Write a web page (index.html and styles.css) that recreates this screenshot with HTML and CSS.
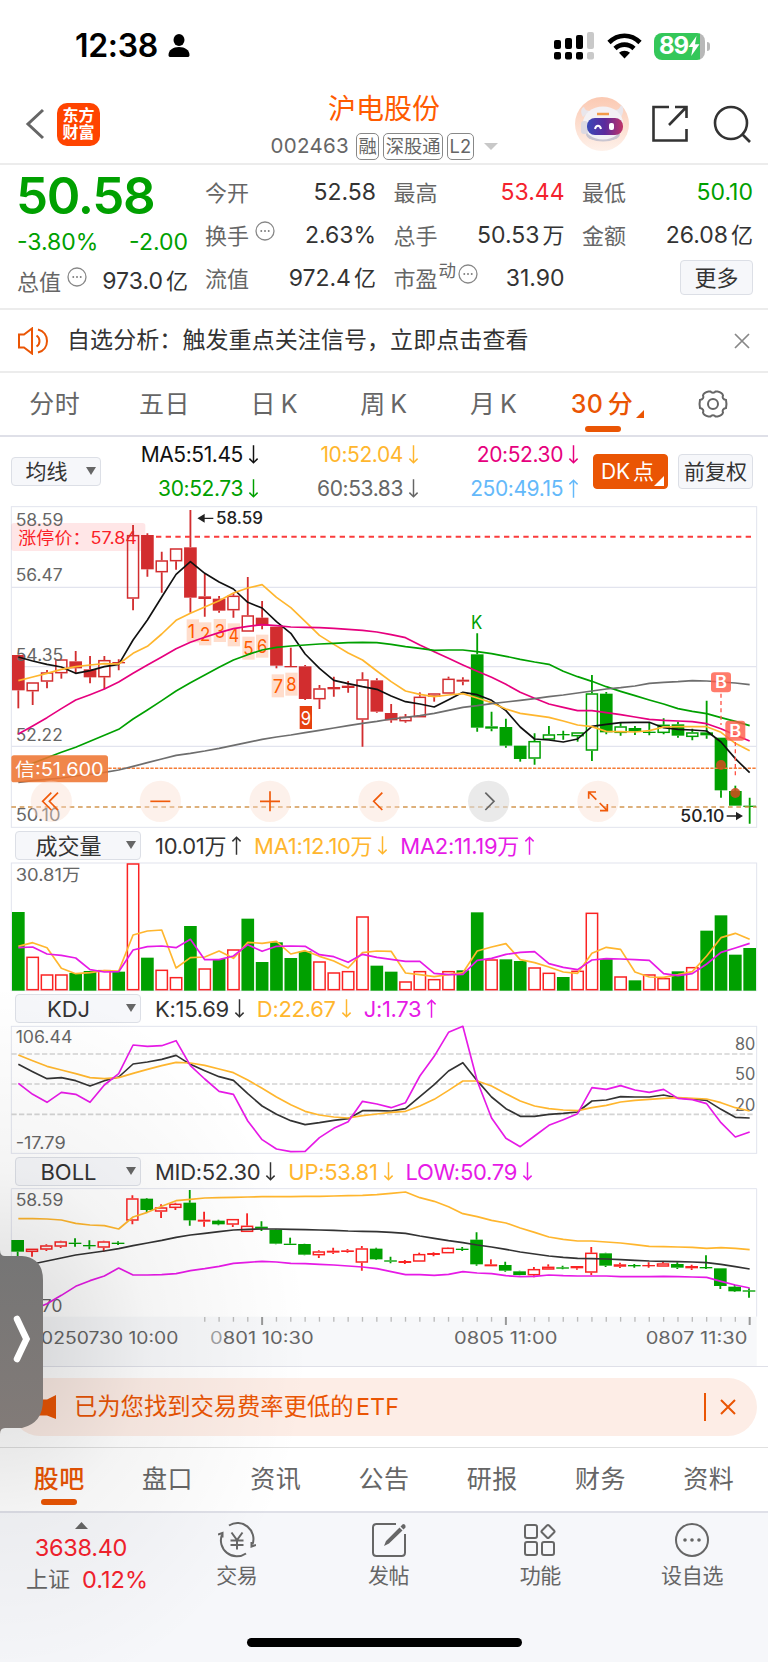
FILE: index.html
```html
<!DOCTYPE html>
<html lang="zh-CN">
  <head>
    <meta charset="UTF-8" />
    <meta name="viewport" content="width=device-width, initial-scale=1.0" />
    <title>沪电股份 002463</title>
    <link rel="stylesheet" href="styles.css">
  </head>
  <body>
    <svg class="defs">
      <symbol id="down" viewBox="0 0 12 22"><path d="M6 1v19M1.5 15.5 6 20l4.500-4.500" /></symbol>
      <symbol id="up" viewBox="0 0 12 22"><path d="M6 21V2M1.500 6.500 6 2l4.500 4.500" /></symbol>
      <symbol id="dots" viewBox="0 0 20 20">
        <circle cx="10" cy="10" r="9" />
        <path d="M5.500 10h1.600M9.200 10h1.600M12.900 10h1.600" stroke-width="1.800" />
      </symbol>
    </svg>

    <div class="status">
      <span class="time">12:38</span>
      <svg class="person" width="22" height="24" viewBox="0 0 22 24">
        <ellipse cx="11" cy="6" rx="5.500" ry="6" />
        <path d="M0.500 21c0-5 4.500-8 10.500-8s10.500 3 10.500 8c0 1.500-.8 2-2 2H2.500c-1.200 0-2-.5-2-2z" />
      </svg>
      <svg class="signal" width="40" height="28" viewBox="0 0 40 28">
        <g>
          <rect x="0" y="8" width="7" height="9" rx="2" /><rect x="11" y="6" width="7" height="11" rx="2" />
          <rect x="22" y="3" width="7" height="14" rx="2" /><rect x="0" y="20" width="7" height="7.500" rx="2" />
          <rect x="11" y="20" width="7" height="7.500" rx="2" /><rect x="22" y="20" width="7" height="7.500" rx="2" />
        </g>
        <g fill="#c9c9c9"><rect x="33" y="0" width="7" height="17" rx="2" /><rect x="33" y="20" width="7" height="7.500" rx="2" /></g>
      </svg>
      <svg class="wifi" width="35" height="26" viewBox="0 0 35 26">
        <g fill="none" stroke="#000" stroke-width="4.600">
          <path d="M2 9.500C11 .5 24 .5 33 9.500" /><path d="M8 15.500c5.500-5.200 13.500-5.200 19 0" />
        </g>
        <path d="M12 19.800c3-2.800 8-2.800 11 0L17.500 25.500z" />
      </svg>
      <div class="battery">89<svg width="12" height="20" viewBox="0 0 12 20"><path d="M8.500 0 .5 11h4.300L3.200 20 11.500 8.300H7z" fill="#fff" /></svg></div>
    </div>

    <div class="header">
      <div class="left">
        <svg width="20" height="32" viewBox="0 0 20 32"><path d="M18 2 3 16l15 14" fill="none" stroke="#666" stroke-width="3" /></svg>
        <div class="logo">东方<br>财富</div>
      </div>
      <div class="title">
        <h1>沪电股份</h1>
        <div class="code">
          <span>002463</span><i>融</i><i>深股通</i><i>L2</i>
          <svg width="14" height="8" viewBox="0 0 14 8"><path d="M0 0h14L7 7z" fill="#c8c8c8" /></svg>
        </div>
      </div>
      <div class="right">
        <svg width="54" height="54" viewBox="0 0 54 54">
          <defs>
            <linearGradient id="halo" x2="0" y2="1"><stop stop-color="#fbc9b2" /><stop offset="1" stop-color="#fef1ea" /></linearGradient>
            <linearGradient id="visor"><stop stop-color="#3a49b8" /><stop offset=".5" stop-color="#5b2a9c" /><stop offset="1" stop-color="#c03468" /></linearGradient>
          </defs>
          <circle cx="27" cy="27" r="27" fill="url(#halo)" />
          <path d="M8 20c-3-5-2-9 1-10 1 3 3 4 6 4M46 20c3-5 3-10 0-12-1 3-3 5-6 5" fill="#e9e6ec" />
          <ellipse cx="28" cy="37" rx="17" ry="7.500" fill="#c9c5d0" />
          <ellipse cx="28" cy="26" rx="20" ry="16.500" fill="#f3f1f5" />
          <rect x="6" y="24" width="7" height="13" rx="3" fill="#dcd9e2" />
          <rect x="12" y="21" width="36" height="17" rx="8" fill="url(#visor)" />
          <path d="M20 32c1-4.500 5-4.500 6 0" fill="none" stroke="#fff" stroke-width="2" />
          <rect x="34" y="26" width="5" height="7" rx="2" fill="#fff" />
          <path d="M22 17h12" stroke="#f29a4a" stroke-width="2.500" />
        </svg>
        <svg width="38" height="38" viewBox="0 0 38 38">
          <path d="M18 2H2.500v33.500H35.500V24M24 2h11.500v11M35 2.500 18 20" fill="none" stroke="#333" stroke-width="2.600" />
        </svg>
        <svg width="38" height="38" viewBox="0 0 38 38">
          <g fill="none" stroke="#333" stroke-width="2.600"><circle cx="18" cy="18" r="16" /><path d="m29 29 8 8" /></g>
        </svg>
      </div>
    </div>

    <div class="quote">
      <div class="price">
        <b>50.58</b>
        <div class="row green change"><span>-3.80%</span><span>-2.00</span></div>
        <div class="row"><label>总值<svg class="dots"><use href="#dots" /></svg></label><span>973.0<em>亿</em></span></div>
      </div>
      <div class="cells">
        <div class="row"><label>今开</label><span>52.58</span></div>
        <div class="row"><label>最高</label><span class="red">53.44</span></div>
        <div class="row"><label>最低</label><span class="green">50.10</span></div>
        <div class="row"><label>换手<svg class="dots"><use href="#dots" /></svg></label><span>2.63%</span></div>
        <div class="row"><label>总手</label><span>50.53<em>万</em></span></div>
        <div class="row"><label>金额</label><span>26.08<em>亿</em></span></div>
        <div class="row"><label>流值</label><span>972.4<em>亿</em></span></div>
        <div class="row"><label>市盈<sup>动</sup><svg class="dots near"><use href="#dots" /></svg></label><span>31.90</span></div>
        <div class="row end"><button class="more">更多</button></div>
      </div>
    </div>

    <div class="notice">
      <svg width="31" height="28" viewBox="0 0 31 28">
        <g fill="none" stroke="#ea5504" stroke-width="2"><path d="M1 7.500h5L14 1.500v25L6 20.500H1z" /><path d="M18.500 8.500c4 2.500 4 8.500 0 11M20 2.500c12 3 12 20 0 23" /></g>
      </svg>
      <p>自选分析：触发重点关注信号，立即点击查看</p>
      <svg width="16" height="16" viewBox="0 0 16 16"><path d="m1 1 14 14M15 1 1 15" stroke="#888" stroke-width="1.700" /></svg>
    </div>

    <div class="periods">
      <span>分时</span><span>五日</span><span>日 K</span><span>周 K</span><span>月 K</span>
      <span class="active">30 分<svg width="8" height="8" viewBox="0 0 8 8"><path d="M8 0v8H0z" fill="#ea5504" /></svg></span>
      <span>
        <svg width="30" height="28" viewBox="0 0 30 28">
          <g fill="none" stroke="#666" stroke-width="2">
            <path d="M10.500 1.500h2c1 1.700 4 1.700 5 0h2c3 .5 5 2 5.500 4-1 2 0 4 3 4.500.6 2.500.6 5.500 0 8-3 .5-4 2.500-3 4.500-.5 2-2.500 3.500-5.500 4h-2c-1-1.700-4-1.700-5 0h-2c-3-.5-5-2-5.500-4 1-2 0-4-3-4.500-.6-2.500-.6-5.500 0-8 3-.5 4-2.500 3-4.500.5-2 2.500-3.500 5.500-4z" />
            <circle cx="15" cy="14" r="5" />
          </g>
        </svg>
      </span>
    </div>

    <div class="averages">
      <button class="select small">均线<i></i></button>
      <div class="ma">
        <span>MA5:51.45<svg><use href="#down" /></svg></span>
        <span class="yellow">10:52.04<svg><use href="#down" /></svg></span>
        <span class="pink">20:52.30<svg><use href="#down" /></svg></span>
        <span class="green">30:52.73<svg><use href="#down" /></svg></span>
        <span class="gray">60:53.83<svg><use href="#down" /></svg></span>
        <span class="blue">250:49.15<svg><use href="#up" /></svg></span>
      </div>
      <button class="dk">DK 点<svg width="10" height="10" viewBox="0 0 10 10"><path d="M10 0v10H0z" fill="#fff" /></svg></button>
      <button class="fq">前复权</button>
    </div>

    <svg class="chart" id="kline" viewBox="0 18 2304 966" height="322"></svg>

    <div class="indicator">
      <button class="select">成交量<i></i></button>
      <span>10.01万<svg><use href="#up" /></svg></span>
      <span class="yellow">MA1:12.10万<svg><use href="#down" /></svg></span>
      <span class="purple">MA2:11.19万<svg><use href="#up" /></svg></span>
    </div>
    <svg class="chart" id="volume" viewBox="0 114 2304 384" height="128"></svg>

    <div class="indicator">
      <button class="select">KDJ<i></i></button>
      <span>K:15.69<svg><use href="#down" /></svg></span>
      <span class="yellow">D:22.67<svg><use href="#down" /></svg></span>
      <span class="purple">J:1.73<svg><use href="#up" /></svg></span>
    </div>
    <svg class="chart" id="kdj" viewBox="0 603 2304 384" height="128"></svg>

    <div class="indicator">
      <button class="select">BOLL<i></i></button>
      <span>MID:52.30<svg><use href="#down" /></svg></span>
      <span class="yellow">UP:53.81<svg><use href="#down" /></svg></span>
      <span class="purple">LOW:50.79<svg><use href="#down" /></svg></span>
    </div>
    <svg class="chart" id="boll" viewBox="0 102 2304 531" height="177"></svg>

    <div class="banner">
      <div class="pill">
        <svg width="30" height="24" viewBox="0 0 30 24"><path d="M30 0v24l-9-3.500H0v-16h21z" fill="#ea5504" /></svg>
        <p>已为您找到交易费率更低的 ETF</p>
        <svg class="close" width="16" height="16" viewBox="0 0 16 16"><path d="m1 1 14 14M15 1 1 15" stroke="#ea5504" stroke-width="2" /></svg>
      </div>
    </div>

    <div class="tabs">
      <span class="active">股吧</span><span>盘口</span><span>资讯</span><span>公告</span><span>研报</span><span>财务</span><span>资料</span>
    </div>

    <div class="nav">
      <div class="index">
        <svg width="13" height="7" viewBox="0 0 13 7"><path d="M6.500 0 13 7H0z" fill="#666" /></svg>
        <span class="red">3638.40</span>
        <div>上证<span class="red">0.12%</span></div>
      </div>
      <div class="item">
        <svg width="38" height="36" viewBox="0 0 38 36">
          <g fill="none" stroke="#666" stroke-width="2">
            <path d="M11 3.500A16 16 0 0 1 34.500 22.500M28 31.500A16 16 0 0 1 4 12.500" />
            <path d="M0 12.500 4.500 11v4.500M38 23l-4.500 1.500V20" />
            <path d="M13.500 10.500 19 18l5.500-7.500M19 18v9.500M12.500 18.500h13M12.500 23h13" />
          </g>
        </svg>
        交易
      </div>
      <div class="item">
        <svg width="38" height="36" viewBox="0 0 38 36">
          <path d="M26 2H6.500Q3 2 3 5.500v25Q3 34 6.500 34h25q3.500 0 3.500-3.500V12" fill="none" stroke="#666" stroke-width="2" />
          <path d="m14 24 2-5L29.500 5.500l3 3L19 21.500zM30.500 4.500 33 2q3 0 2.500 3.500L33.500 7.500z" fill="#666" />
        </svg>
        发帖
      </div>
      <div class="item">
        <svg width="38" height="36" viewBox="0 0 38 36">
          <g fill="none" stroke="#666" stroke-width="2">
            <rect x="4" y="3" width="12" height="13" rx="2" /><rect x="4" y="20" width="12" height="13" rx="2" />
            <rect x="21" y="20" width="12" height="13" rx="2" /><rect x="22" y="4.500" width="10" height="10" rx="1.500" transform="rotate(45 27 9.500)" />
          </g>
        </svg>
        功能
      </div>
      <div class="item">
        <svg width="38" height="36" viewBox="0 0 38 36">
          <circle cx="19" cy="18" r="16" fill="none" stroke="#666" stroke-width="2" />
          <g fill="#666"><circle cx="12" cy="18" r="1.800" /><circle cx="19" cy="18" r="1.800" /><circle cx="26" cy="18" r="1.800" /></g>
        </svg>
        设自选
      </div>
    </div>
    <div class="home"></div>

    <div class="shade"></div>
    <svg class="handle" width="44" height="184" viewBox="0 0 44 184">
      <defs><linearGradient id="grip" x2="0" y2="1"><stop stop-color="#757575" /><stop offset="1" stop-color="#827b78" /></linearGradient></defs>
      <path d="M0 0Q0 6 5 6H22Q43 8 43 30V150Q43 173 22 178H5Q0 178 0 184z" fill="url(#grip)" />
      <path d="M17 69Q25 86 26.500 89Q25 92 17 109" fill="none" stroke="#fff" stroke-width="6.500" stroke-linecap="round" />
    </svg>

    <script src="script.js"></script>
  </body>
</html>
```
FILE: styles.css
```css
*,
*::before,
*::after {
  box-sizing: border-box;
  margin: 0;
  padding: 0;
}
body {
  position: relative;
  width: 768px;
  height: 1662px;
  overflow: hidden;
  background-color: #fff;
  color: #333;
  font-family: Inter, "Noto Sans CJK SC", sans-serif;
  font-size: 22px;
  line-height: 1;
  letter-spacing: -0.3px;
}
svg {
  display: block;
  flex-shrink: 0;
}
button {
  font: inherit;
  color: #333;
  letter-spacing: 0;
  background-color: #f6f7fa;
  border: 1.500px solid #dcdfe6;
  border-radius: 4px;
  white-space: nowrap;
}
p,
span {
  white-space: nowrap;
}
.defs {
  position: absolute;
  width: 0;
  height: 0;
}
.red {
  color: #f4222d;
}
.green {
  color: #00a000;
}
.yellow {
  color: #ffb62e;
}
.pink {
  color: #e6007e;
}
.purple {
  color: #e61ae6;
}
.blue {
  color: #64b9fa;
}
.gray {
  color: #666;
}

/* status bar */
.status {
  display: flex;
  align-items: center;
  height: 92px;
  padding: 0 63px 0 75px;
}
.time {
  width: 93px;
  font-size: 32px;
  font-weight: 600;
  color: #000;
}
.signal {
  margin-left: auto;
}
.wifi {
  margin: 0 12px 0 13px;
}
.battery {
  position: relative;
  display: flex;
  align-items: center;
  justify-content: center;
  width: 51px;
  height: 27px;
  border-radius: 8px;
  background: linear-gradient(to right, #34c759 46px, #b8b8b8 46px);
  color: #fff;
  font-size: 24px;
  font-weight: 700;
  letter-spacing: -1px;
}
.battery::after {
  content: "";
  position: absolute;
  right: -5px;
  width: 3px;
  height: 9px;
  border-radius: 0 3px 3px 0;
  background-color: #b8b8b8;
}

/* header */
.header {
  display: grid;
  grid-template-columns: 1fr auto 1fr;
  height: 73px;
  padding: 0 17px 0 25px;
  border-bottom: 2px solid #ececec;
}
.left {
  display: flex;
  align-items: center;
  gap: 12px;
  height: 64px;
}
.logo {
  width: 43px;
  height: 43px;
  padding-top: 4px;
  border-radius: 10px;
  background-color: #ff4400;
  color: #fff;
  font-size: 16px;
  font-weight: 700;
  line-height: 17.500px;
  letter-spacing: 0;
  text-align: center;
}
.title {
  display: flex;
  flex-direction: column;
  align-items: center;
  margin-right: 8px;
}
h1 {
  margin-top: 3px;
  font-size: 28px;
  font-weight: 400;
  line-height: 28px;
  letter-spacing: 0;
  color: #ff5b00;
}
.code {
  display: flex;
  align-items: center;
  gap: 4px;
  margin-top: 10px;
  color: #666;
  font-size: 20.500px;
  letter-spacing: 0.3px;
}
.code span {
  margin-right: 3px;
}
.code i {
  height: 27px;
  padding: 0 1.500px;
  border: 1.500px solid #888;
  border-radius: 5px;
  font-size: 18.300px;
  font-style: normal;
  line-height: 24px;
  letter-spacing: 0;
}
.code svg {
  margin-left: 6px;
}
.right {
  display: flex;
  align-items: center;
  justify-content: flex-end;
  gap: 24px;
  height: 64px;
}
.right svg:first-child {
  margin-right: -2px;
}

/* quote */
.quote {
  display: flex;
  gap: 17px;
  height: 145px;
  padding: 6px 15px 0 17px;
  border-bottom: 2px solid #ececec;
}
.price {
  width: 171px;
}
.price b {
  display: block;
  height: 51px;
  margin-left: -1px;
  font-size: 51px;
  font-weight: 600;
  line-height: 50px;
  letter-spacing: -1.300px;
  color: #00a000;
}
.row {
  display: flex;
  align-items: center;
  justify-content: space-between;
  height: 43px;
}
.row label {
  display: flex;
  align-items: center;
  color: #666;
  letter-spacing: 0;
}
.row span {
  font-size: 23px;
  letter-spacing: 0;
}
.row em {
  margin-left: 3px;
  font-size: 22px;
  font-style: normal;
}
.price .row {
  margin-top: 1px;
}
.price .change {
  height: 34px;
  margin-top: 3px;
}
.cells {
  flex: 1;
  display: grid;
  grid-template-columns: repeat(3, 171px);
  column-gap: 17.500px;
  align-content: start;
}
.dots {
  width: 20px;
  height: 20px;
  margin: -9px 0 0 6px;
  fill: none;
  stroke: #888;
  stroke-width: 1.300;
}
.dots.near {
  margin-left: 2px;
}
sup {
  margin: -16px 0 0 1px;
  font-size: 17.500px;
  line-height: 1;
}
.row.end {
  justify-content: flex-end;
}
.more {
  width: 73px;
  height: 35px;
  margin-top: -2px;
}

/* notice */
.notice {
  display: flex;
  align-items: center;
  height: 63px;
  padding: 0 18px;
  border-bottom: 2px solid #ececec;
}
.notice p {
  flex: 1;
  margin-left: 18px;
  font-size: 23px;
  letter-spacing: 0.080px;
}

/* tabs */
.periods,
.tabs {
  display: grid;
  grid-template-columns: repeat(7, 1fr);
  height: 64px;
  border-bottom: 2px solid #dfe0e8;
  font-size: 25px;
  letter-spacing: 0.500px;
  word-spacing: -3px;
  color: #666;
}
.periods span,
.tabs span {
  position: relative;
  display: flex;
  align-items: center;
  justify-content: center;
}
.periods .active,
.tabs .active {
  color: #ea5504;
  font-weight: 500;
}
.periods .active svg {
  margin: 20px -8px 0 3px;
}
.active::after {
  content: "";
  position: absolute;
  bottom: 3px;
  width: 36px;
  height: 6px;
  border-radius: 3px;
  background-color: #ea5504;
}

/* averages */
.averages {
  display: flex;
  align-items: center;
  height: 69px;
  padding: 0 15px 0 11px;
}
.select {
  position: relative;
  width: 126px;
  height: 29px;
  padding-right: 19px;
  line-height: 24px;
}
.select i {
  position: absolute;
  top: 9px;
  right: 4px;
  border: 5px solid transparent;
  border-top: 8px solid #666;
  border-bottom: 0;
}
.select.small {
  width: 90px;
  font-size: 21px;
}
.ma {
  display: grid;
  grid-template-columns: 158px 160px 160px;
  grid-auto-rows: 34px;
  width: 478px;
  margin-right: 14px;
}
.ma span,
.indicator span {
  display: flex;
  align-items: center;
}
.ma span {
  justify-content: flex-end;
  font-size: 21px;
  letter-spacing: -0.400px;
}
.ma span:first-child {
  color: #111;
}
.ma svg,
.indicator span svg {
  width: 11px;
  height: 21px;
  margin-left: 5px;
  fill: none;
  stroke: currentColor;
  stroke-width: 1.600;
}
.dk,
.fq {
  position: relative;
  width: 75px;
  height: 35px;
  font-size: 21px;
}
.dk {
  padding-right: 6px;
  border-color: #ea5504;
  background-color: #ea5504;
  color: #fff;
  word-spacing: -3px;
}
.dk svg {
  position: absolute;
  right: 3px;
  bottom: 2px;
}
.fq {
  margin-left: 10px;
}

/* charts */
.chart {
  width: 768px;
  overflow: visible;
}
.chart text {
  font-size: 50px;
  letter-spacing: 0;
  fill: #666;
}
.indicator {
  display: flex;
  align-items: center;
  height: 35px;
  padding-left: 15px;
}
.indicator span {
  margin-right: 12px;
}
.indicator .select {
  margin-right: 14px;
}

/* banner */
.banner {
  height: 82px;
  padding: 11px 11px 0;
  border-top: 1px solid #dfe0e8;
  border-bottom: 1px solid #e0e0e0;
}
.pill {
  display: flex;
  align-items: center;
  height: 58px;
  padding: 0 21px 0 15px;
  border-radius: 29px;
  background-color: #fdede6;
  color: #ea5504;
}
.pill p {
  flex: 1;
  margin-left: 18px;
  font-size: 23.300px;
  letter-spacing: 0;
  word-spacing: -4px;
}
.close {
  box-sizing: content-box;
  padding: 6px 0 6px 14px;
  border-left: 2px solid #ea5504;
}

/* bottom */
.tabs {
  height: 65px;
  padding: 0 5px;
}
.tabs .active::after {
  bottom: 6px;
}
.nav {
  display: grid;
  grid-template-columns: 161px repeat(4, 1fr);
  height: 149px;
  padding-top: 9px;
  background-color: #f6f7fa;
  color: #666;
}
.index {
  display: flex;
  flex-direction: column;
  align-items: center;
  padding-left: 1px;
}
.index span {
  font-size: 23.500px;
}
.index > span {
  margin: 7px 0 8px;
}
.index div {
  display: flex;
  align-items: center;
  letter-spacing: 0;
  margin-left: 12px;
}
.index div span {
  margin-left: 12px;
}
.item {
  display: flex;
  flex-direction: column;
  align-items: center;
  gap: 7px;
  font-size: 21px;
}
.home {
  position: absolute;
  left: 247px;
  top: 1638px;
  width: 275px;
  height: 9px;
  border-radius: 5px;
  background-color: #000;
}
.shade {
  position: absolute;
  inset: 0;
  background: radial-gradient(ellipse 310px 360px at 0 1343px, rgba(0, 0, 0, 0.150), rgba(0, 0, 0, 0.045) 48%, transparent);
}
.handle {
  position: absolute;
  left: 0;
  top: 1250px;
}
```
FILE: script.js
```js
// three chart units are one css pixel
const STEP = 43.02;
const RIGHT = 2270;
const RED = "#d22d2f";
const BRIGHT = "#fa2323";
const GREEN = "#00a000";
const YELLOW = "#ffb62e";
const PINK = "#e6007e";
const PURPLE = "#e61ae6";
const LINE = "#e2e4ee";

const x = (i) => 55 + i * STEP;

function line(values, color, width = 5) {
  const points = values.map((y, i) => `${x(i).toFixed(1)},${y}`).join(" ");
  return `<polyline points="${points}" fill="none" stroke="${color}" stroke-width="${width}" stroke-linejoin="round" />`;
}

function rule(x1, y, x2, color, width = 3, dash = "") {
  return `<path d="M${x1} ${y}H${x2}" stroke="${color}" stroke-width="${width}" stroke-dasharray="${dash}" />`;
}

function text(x, y, str, length, attrs = "") {
  return `<text x="${x}" y="${y}" textLength="${length}" lengthAdjust="spacingAndGlyphs" ${attrs}>${str}</text>`;
}

function frame(top, bottom) {
  return `<rect x="34" y="${top}" width="${RIGHT - 34}" height="${bottom - top}" fill="none" stroke="${LINE}" stroke-width="3" />`;
}

// r/g = filled, R/G = hollow; then high, top, bottom, low
function candles(rows, red, shift = 0) {
  return rows
    .trim()
    .split("\n")
    .map((row, i) => {
      const [type, ...v] = row.trim().split(" ");
      const [high, top, bottom, low] = v.map(Number);
      const color = type.toLowerCase() === "r" ? red : GREEN;
      const hollow = type === "R" || type === "G";
      const cx = x(i) + shift;
      const body = hollow
        ? `<rect x="${cx - 16.5}" y="${top + 2}" width="33" height="${Math.max(bottom - top - 4, 3)}" fill="none" stroke="${color}" stroke-width="4.5" />`
        : `<rect x="${cx - 19}" y="${top}" width="38" height="${Math.max(bottom - top, 4)}" fill="${color}" />`;
      return `<path d="M${cx} ${high}V${top}M${cx} ${bottom}V${low}" stroke="${color}" stroke-width="5.5" />${body}`;
    })
    .join("");
}

const kline = `
  r 465 465 571 625
  R 547 547 574 615
  R 510 517 545 565
  R 478 478 520 536
  r 453 484 505 520
  r 468 508 532 550
  R 468 480 532 568
  r 478 486 490 511
  R 75 105 296 331
  r 100 105 208 230
  R 155 181 217 278
  R 145 145 184 209
  r 30 142 293 338
  r 222 289 297 350
  r 288 296 332 338
  R 280 287 331 353
  R 231 346 395 395
  r 303 353 377 388
  r 380 380 497 505
  r 443 498 501 501
  r 495 499 597 600
  R 555 565 598 627
  r 530 561 568 590
  r 543 557 564 578
  R 517 538 659 740
  r 535 541 635 638
  r 612 639 661 668
  R 642 650 664 668
  R 577 590 652 652
  R 580 580 590 605
  R 530 536 581 581
  r 532 539 545 556
  g 400 463 683 695
  g 635 679 686 694
  g 656 681 737 743
  g 737 737 777 785
  G 700 723 776 794
  G 678 703 719 719
  g 692 702 706 719
  G 697 697 709 725
  G 525 580 752 783
  g 576 581 697 703
  G 668 679 699 707
  g 678 684 694 705
  g 668 695 699 706
  G 655 674 699 703
  g 665 673 707 713
  G 686 697 711 721
  g 602 697 706 716
  g 713 713 871 893
  g 857 873 917 917
  g 893 917 920 971`;

const ma5 = [471, 483, 493, 501, 520, 512, 500, 493, 420, 360, 291, 223, 185, 220, 246, 267, 307, 324, 365, 400, 462, 505, 541, 551, 560, 568, 588, 605, 612, 621, 599, 577, 584, 601, 632, 681, 717, 720, 726, 717, 679, 673, 668, 667, 667, 683, 688, 690, 693, 726, 776, 818];
const ma10 = [542, 531, 520, 508, 500, 495, 491, 492, 460, 439, 402, 361, 340, 321, 302, 279, 264, 254, 292, 323, 364, 406, 433, 459, 480, 513, 545, 573, 583, 590, 585, 581, 594, 608, 627, 640, 646, 652, 663, 675, 680, 694, 695, 696, 692, 681, 680, 680, 680, 697, 730, 752];
const ma20 = [702, 678, 653, 626, 600, 584, 567, 546, 520, 495, 471, 446, 427, 412, 398, 386, 379, 374, 377, 381, 382, 383, 385, 388, 391, 396, 404, 413, 435, 455, 475, 495, 514, 532, 553, 577, 595, 612, 622, 632, 632, 638, 644, 651, 658, 661, 663, 665, 671, 686, 705, 723];
const ma30 = [808, 790, 773, 757, 742, 724, 706, 688, 657, 630, 602, 573, 548, 525, 502, 480, 464, 450, 442, 438, 435, 432, 430, 428, 427, 428, 433, 440, 445, 451, 450, 450, 455, 461, 469, 478, 486, 493, 514, 530, 544, 560, 574, 587, 600, 612, 626, 634, 641, 653, 664, 677];
const ma60 = [847, 842, 838, 834, 828, 823, 817, 810, 799, 788, 777, 766, 760, 753, 745, 736, 727, 718, 711, 705, 698, 691, 684, 677, 670, 664, 657, 652, 647, 640, 631, 622, 617, 611, 606, 601, 596, 590, 585, 579, 573, 567, 563, 558, 550, 547, 545, 542, 543, 546, 549, 554];

const marks = [[560, 358], [597, 367], [641, 357], [683, 370], [727, 410], [768, 404], [815, 523], [856, 518], [899, 618]];

function mark([mx, my], i) {
  const last = i === 8;
  return `<rect x="${mx}" y="${my}" width="37" height="69" fill="${last ? "#e6410f" : "#ffd9c7"}" fill-opacity="${last ? 1 : 0.9}" />
    ${text(mx + 3, my + 56, i + 1, i ? 31 : 22, `style="font-size:58px;fill:${last ? "#fff" : "#ff5a00"}"`)}`;
}

const buttons = [
  [154, "M0-26-26 0 0 26M20-26-6 0 20 26"],
  [481, "M-30 0H30"],
  [810, "M-30 0H30M0-30V30"],
  [1137, "M10-26-16 0 10 26"],
  [1466, "M-10-26 16 0-10 26"],
  [1794, "M-5-5-28-28M-28-8V-28H-6M5 5 28 28M28 8V28H6"],
];

function button([cx, d]) {
  const gray = cx === 1466;
  return `<g transform="translate(${cx} 904)"><circle r="62" fill="${gray ? "#dcdcdc" : "#fbdccd"}" fill-opacity="${gray ? 0.6 : 0.4}" />
    <path d="${d}" fill="none" stroke="${gray ? "#666" : "#f05a0a"}" stroke-width="5" /></g>`;
}

function badge(bx, by, to, dot) {
  return `<path d="M${bx} ${by + 34}V${to}" stroke="#ff5548" stroke-width="4" stroke-dasharray="12 10" />
    <circle cx="${bx}" cy="${dot}" r="15" fill="#c8501e" fill-opacity=".9" />
    <rect x="${bx - 30}" y="${by - 30}" width="60" height="60" rx="10" fill="#ff5a46" fill-opacity=".8" />
    ${text(bx - 18, by + 18, "B", 36, 'style="font-weight:600;fill:#fff"')}`;
}

document.getElementById("kline").innerHTML = [
  frame(20, 982),
  rule(34, 262, RIGHT, LINE, 4), rule(34, 500, RIGHT, LINE, 4), rule(34, 739, RIGHT, LINE, 4),
  '<rect x="34" y="69" width="402" height="84" rx="8" fill="#ff3c46" fill-opacity=".13" />',
  text(55, 131, "涨停价：57.84", 356, 'style="fill:#fa1e28"'),
  candles(kline, RED),
  text(47, 78, "58.59", 143), text(47, 243, "56.47", 141), text(47, 484, "54.35", 143),
  text(47, 724, "52.22", 141), text(47, 963, "50.10", 135),
  rule(468, 110, 2264, "#fa3c3c", 6, "16 13"),
  rule(325, 805, RIGHT, "#f57d37", 4.5, "10 4"),
  rule(34, 921, RIGHT, "#d29650", 5, "14 11"),
  marks.map(mark).join(""),
  line(ma5, "#111"), line(ma10, YELLOW), line(ma20, PINK), line(ma30, GREEN), line(ma60, "#6e6e6e"),
  '<rect x="34" y="766" width="290" height="81" rx="8" fill="#ee7430" fill-opacity=".87" />',
  text(45, 828, "信:51.600", 266, 'style="font-size:54px;fill:#fff"'),
  '<path d="M596 55h44M612 45l-16 10 16 10z" fill="#222" stroke="#222" stroke-width="4" />',
  text(648, 73, "58.59", 141, 'style="fill:#222;font-weight:500"'),
  text(2041, 967, "50.10", 132, 'style="fill:#222;font-weight:500"'),
  '<path d="M2180 948h44M2210 939l15 9-15 9z" fill="#222" stroke="#222" stroke-width="4" />',
  text(1413, 386, "K", 34, `style="font-size:56px;fill:${GREEN}"`),
  badge(2163, 547, 675, 795), badge(2206, 692, 835, 879),
  buttons.map(button).join(""),
].join("");

const volumes = "g261 r397 r450 r450 g444 g438 r437 g440 r117 g398 r436 r458 g303 r432 g402 r375 g281 g411 g352 g399 g379 r411 r444 r440 r276 g422 g440 r471 r440 r464 r440 g436 g262 r405 g403 g408 r429 r445 g456 r439 r265 g402 r456 g466 r450 r461 g439 r428 g317 g271 g389 g369";

const bars = volumes.split(" ").map((v, i) => {
  const top = Number(v.slice(1));
  return v[0] === "g"
    ? `<rect x="${x(i) - 19}" y="${top}" width="38" height="${497 - top}" fill="${GREEN}" />`
    : `<rect x="${x(i) - 17}" y="${top}" width="34" height="${494 - top}" fill="#fff" stroke="${BRIGHT}" stroke-width="4.5" />`;
});

const vol1 = [364, 353, 368, 430, 446, 443, 437, 438, 330, 318, 315, 429, 398, 396, 378, 400, 352, 355, 349, 387, 377, 394, 408, 429, 383, 378, 379, 444, 449, 455, 449, 443, 378, 366, 356, 404, 413, 426, 441, 445, 385, 367, 373, 441, 456, 457, 449, 440, 393, 338, 325, 343];
const vol2 = [368, 366, 387, 391, 399, 434, 441, 440, 375, 365, 363, 368, 343, 404, 404, 393, 359, 379, 364, 363, 364, 389, 395, 412, 388, 397, 403, 409, 409, 445, 449, 448, 406, 400, 388, 382, 380, 416, 427, 434, 405, 401, 402, 404, 406, 446, 452, 446, 417, 382, 369, 355];

document.getElementById("volume").innerHTML = [
  frame(114, 497),
  text(47, 167, "30.81万", 194),
  bars.join(""),
  line(vol1, YELLOW), line(vol2, PURPLE),
].join("");

const k = [718, 740, 761, 758, 767, 783, 767, 756, 717, 711, 703, 691, 718, 737, 755, 766, 806, 843, 868, 887, 899, 893, 886, 881, 857, 857, 858, 851, 815, 779, 738, 713, 767, 816, 851, 874, 874, 868, 865, 861, 828, 825, 815, 816, 816, 810, 819, 822, 826, 853, 877, 879];
const d = [690, 707, 724, 735, 746, 758, 761, 758, 745, 733, 722, 712, 714, 721, 732, 743, 765, 790, 816, 839, 859, 870, 876, 879, 872, 867, 862, 859, 843, 823, 796, 768, 768, 783, 806, 828, 843, 851, 855, 857, 848, 841, 831, 826, 823, 820, 818, 820, 822, 833, 848, 858];
const j = [775, 808, 832, 802, 808, 832, 780, 746, 660, 664, 662, 647, 722, 762, 799, 808, 888, 944, 972, 980, 979, 938, 910, 890, 829, 837, 848, 833, 753, 694, 622, 604, 768, 879, 940, 965, 933, 901, 884, 866, 788, 793, 782, 795, 802, 793, 820, 824, 836, 893, 936, 921];

document.getElementById("kdj").innerHTML = [
  frame(604, 985),
  [687, 777, 868].map((y) => rule(34, y, 2264, "#d4d4d4", 5, "16 7")).join(""),
  text(47, 655, "106.44", 170), text(47, 972, "-17.79", 150),
  text(2205, 675, "80", 61), text(2205, 766, "50", 61), text(2205, 857, "20", 61),
  line(k, "#333"), line(d, YELLOW), line(j, PURPLE),
].join("");

const bollCandles = `
  g 255 255 290 305
  R 281 281 291 305
  R 268 271 284 288
  R 257 259 275 279
  g 250 263 266 275
  g 256 270 274 283
  R 257 259 278 290
  g 259 263 266 270
  R 121 130 197 208
  g 129 131 165 172
  R 148 157 170 189
  R 143 146 159 165
  g 105 143 196 212
  r 170 194 200 215
  g 194 197 208 211
  R 192 192 209 216
  R 175 212 231 231
  g 199 215 221 228
  g 223 224 266 268
  g 248 266 269 269
  g 266 267 299 301
  R 286 289 301 309
  r 278 287 293 297
  r 282 286 291 293
  R 273 280 323 347
  g 278 281 313 315
  g 305 316 320 325
  r 315 318 324 327
  R 293 297 320 320
  r 292 294 300 304
  R 277 278 295 295
  g 276 281 284 288
  g 232 254 328 332
  r 313 328 334 334
  g 320 330 347 350
  g 347 349 360 361
  R 336 342 361 367
  R 328 335 344 344
  g 332 337 340 343
  r 333 333 340 344
  R 276 293 353 360
  g 293 295 332 336
  R 323 328 335 339
  g 327 330 333 338
  r 322 330 333 338
  R 320 325 335 335
  g 322 327 338 342
  r 329 333 340 345
  g 301 336 339 342
  g 340 340 393 402
  g 390 395 409 411
  g 400 406 409 428`;

const up = [191, 191, 192, 195, 205, 210, 212, 222, 186, 172, 154, 137, 133, 129, 128, 127, 126, 125, 125, 125, 124, 124, 123, 122, 121, 119, 115, 111, 128, 139, 155, 176, 185, 196, 204, 219, 232, 246, 253, 258, 258, 261, 264, 269, 274, 275, 276, 277, 280, 278, 280, 284];
const mid = [337, 327, 318, 309, 300, 294, 288, 281, 272, 264, 256, 247, 240, 235, 230, 225, 223, 222, 222, 223, 224, 225, 226, 228, 229, 230, 232, 235, 243, 250, 257, 263, 270, 276, 283, 291, 297, 303, 307, 310, 311, 312, 314, 316, 318, 319, 320, 321, 323, 328, 335, 342];
const low = [480, 464, 446, 421, 394, 377, 363, 339, 360, 360, 359, 356, 347, 341, 334, 325, 322, 319, 321, 325, 326, 328, 330, 333, 336, 341, 350, 359, 359, 361, 358, 350, 354, 356, 362, 365, 364, 360, 362, 363, 363, 363, 365, 365, 365, 364, 365, 366, 367, 379, 390, 399];

let ticks = "";
for (let i = 13; i < 52; i++) {
  const major = i % 17 === 0;
  ticks += `<path d="M${x(i)} 486v${major ? 24 : 14}" stroke="${major ? "#999" : "#bbb"}" stroke-width="${major ? 6 : 4}" />`;
}

document.getElementById("boll").innerHTML = [
  `<rect x="0" y="485" width="${RIGHT}" height="148" fill="#f7f8fa" />`,
  `<path d="M34 485V101H${RIGHT}V485" fill="none" stroke="${LINE}" stroke-width="3" />`,
  text(47, 154, "58.59", 143), text(47, 470, "49.70", 140),
  candles(bollCandles, BRIGHT, -2),
  line(up, YELLOW), line(mid, "#333"), line(low, PURPLE),
  ticks,
  text(88, 568, "20250730 10:00", 447),
  text(630, 568, '<tspan fill-opacity=".6">0</tspan>801 10:30', 311),
  text(1362, 568, "0805 11:00", 310),
  text(1937, 568, "0807 11:30", 305),
].join("");
```
